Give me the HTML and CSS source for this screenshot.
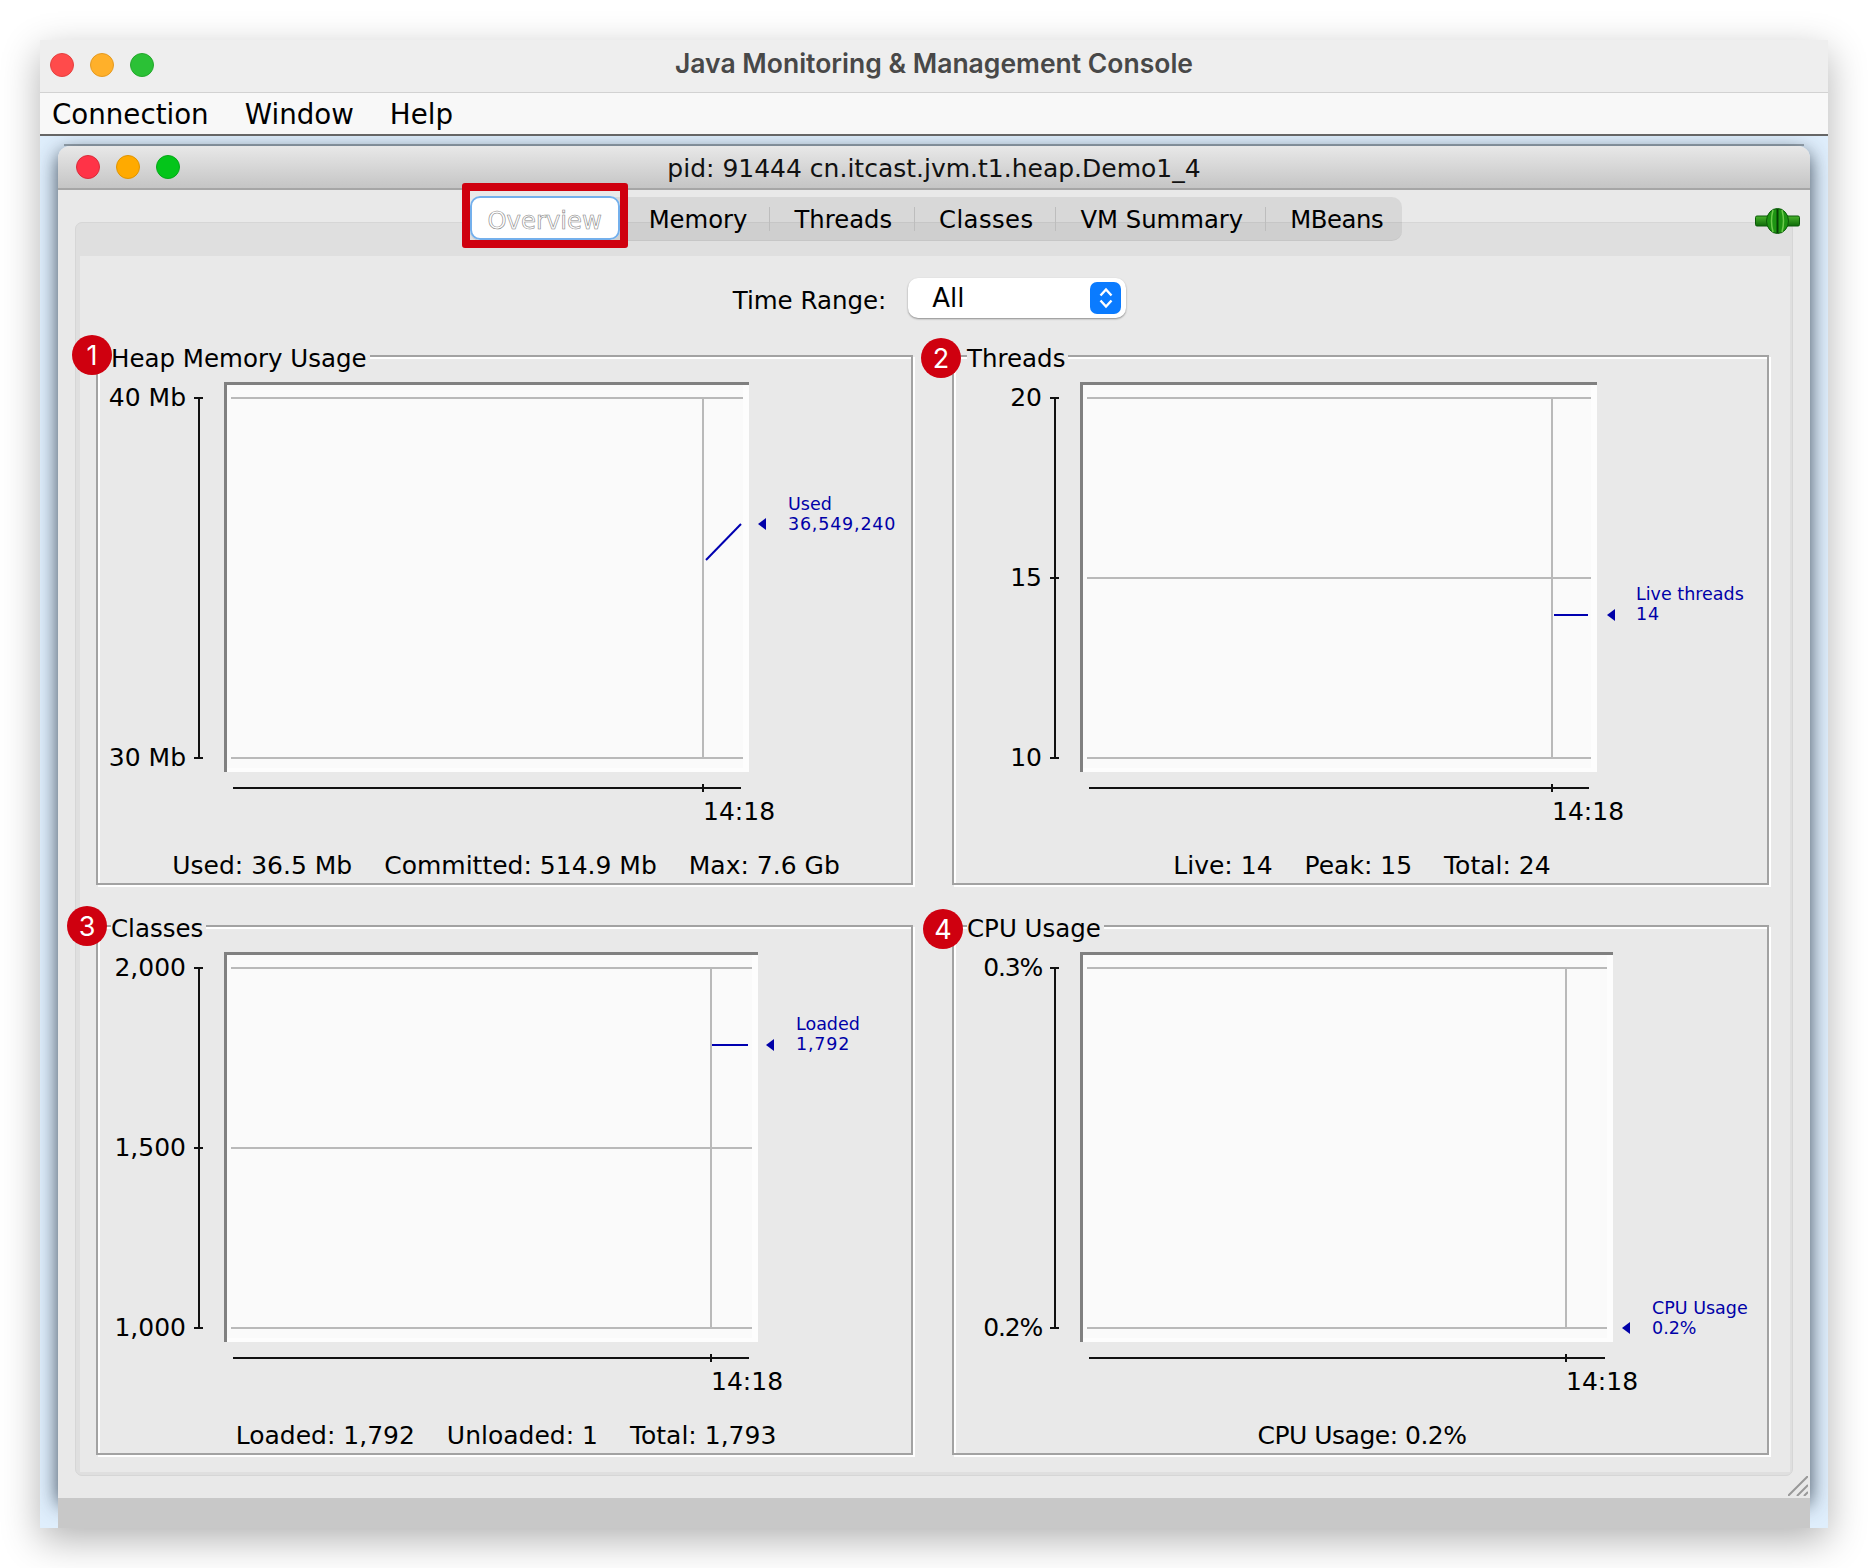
FILE: index.html
```html
<!DOCTYPE html>
<html lang="en">
<head>
    <meta charset="UTF-8">
    <title>Java Monitoring &amp; Management Console</title>
    <link rel="stylesheet" href="styles.css">
</head>
<body>
<div class="app">
    <div class="titlebar">
        <div class="lights">
            <span class="light red"></span><span class="light amber"></span><span class="light green"></span>
        </div>
        <div class="app-title">Java Monitoring &amp; Management Console</div>
    </div>
    <div class="menubar">
        <span>Connection</span>
        <span>Window</span>
        <span>Help</span>
    </div>
    <div class="desktop">
        <div class="frame-edge"></div>
        <div class="frame">
            <div class="frame-title">
                <div class="lights inner">
                    <span class="light red2"></span><span class="light amber2"></span><span class="light green2"></span>
                </div>
                <div class="frame-name">pid: 91444 cn.itcast.jvm.t1.heap.Demo1_4</div>
            </div>
            <div class="frame-body">
                <div class="tabbar">
                    <div class="tab selected">Overview<span class="callout"></span></div>
                    <div class="tab">Memory</div>
                    <div class="tab">Threads</div>
                    <div class="tab">Classes</div>
                    <div class="tab">VM Summary</div>
                    <div class="tab">MBeans</div>
                </div>
                <svg class="plug" width="45" height="26" viewBox="0 0 45 26">
                    <defs>
                        <linearGradient id="plugBar" x1="0" y1="0" x2="0" y2="1">
                            <stop offset="0" stop-color="#49b32c"/>
                            <stop offset="1" stop-color="#0d6a08"/>
                        </linearGradient>
                    </defs>
                    <rect x="0.5" y="8" width="44" height="10" rx="1.5" fill="url(#plugBar)" stroke="#0b5a08"/>
                    <ellipse cx="22.5" cy="13" rx="11" ry="12.5" fill="#1d9412" stroke="#0b5a08"/>
                    <path d="M18 2 Q15 13 18 24 M27 2 Q30 13 27 24" fill="none" stroke="#6cc94c" stroke-width="1.5"/>
                    <path d="M22.5 1 V25" stroke="#063f04" stroke-width="2"/>
                </svg>
                <div class="tabpane">
                    <div class="tabcontent">
                        <div class="range-row">
                            <span class="range-label">Time Range:</span>
                            <div class="select">
                                <span>All</span>
                                <span class="select-btn">
                                    <svg width="18" height="26" viewBox="0 0 18 26">
                                        <path d="M3.5 10.5 L9 4.5 L14.5 10.5 M3.5 15.5 L9 21.5 L14.5 15.5" fill="none" stroke="#fff" stroke-width="2.4"/>
                                    </svg>
                                </span>
                            </div>
                        </div>
                        <div class="charts">

                            <!-- Heap -->
                            <div class="panel">
                                <span class="badge badge-1">1</span>
                                <span class="panel-title">Heap Memory Usage</span>
                                <svg class="chart" width="813" height="476">
                                    <rect class="plot-edge" x="126" y="24" width="525" height="390"/>
                                    <rect class="plot-bg" x="129" y="27" width="516" height="383"/>
                                    <path class="plot-border" d="M127.5 414 V25.5 H651"/>
                                    <path class="grid" d="M133 40 H645 M133 400 H645 M605 40 V400"/>
                                    <path class="axis" d="M101 40 V400 M96 40 H105 M96 400 H105 M135 430 H643 M605 426 V434"/>
                                    <text class="tick" x="88" y="48" text-anchor="end">40 Mb</text>
                                    <text class="tick" x="88" y="408" text-anchor="end">30 Mb</text>
                                    <text class="tick" x="605" y="462">14:18</text>
                                    <path class="series" d="M608 202 L643 166"/>
                                    <path class="marker" d="M660 166 L668 160 V172 Z"/>
                                    <text class="legend" x="690" y="152">Used</text>
                                    <text class="legend num" x="690" y="172">36,549,240</text>
                                </svg>
                                <div class="stats"><span>Used: 36.5 Mb</span><span>Committed: 514.9 Mb</span><span>Max: 7.6 Gb</span></div>
                            </div>

                            <!-- Threads -->
                            <div class="panel">
                                <span class="badge badge-2">2</span>
                                <span class="panel-title">Threads</span>
                                <svg class="chart" width="813" height="476">
                                    <rect class="plot-edge" x="126" y="24" width="517" height="390"/>
                                    <rect class="plot-bg" x="129" y="27" width="508" height="383"/>
                                    <path class="plot-border" d="M127.5 414 V25.5 H643"/>
                                    <path class="grid" d="M133 40 H637 M133 220 H637 M133 400 H637 M598 40 V400"/>
                                    <path class="axis" d="M101 40 V400 M96 40 H105 M96 220 H105 M96 400 H105 M135 430 H635 M598 426 V434"/>
                                    <text class="tick" x="88" y="48" text-anchor="end">20</text>
                                    <text class="tick" x="88" y="228" text-anchor="end">15</text>
                                    <text class="tick" x="88" y="408" text-anchor="end">10</text>
                                    <text class="tick" x="598" y="462">14:18</text>
                                    <path class="series" d="M600 257 H634"/>
                                    <path class="marker" d="M653 257 L661 251 V263 Z"/>
                                    <text class="legend" x="682" y="242">Live threads</text>
                                    <text class="legend num" x="682" y="262">14</text>
                                </svg>
                                <div class="stats"><span>Live: 14</span><span>Peak: 15</span><span>Total: 24</span></div>
                            </div>

                            <!-- Classes -->
                            <div class="panel">
                                <span class="badge badge-3">3</span>
                                <span class="panel-title">Classes</span>
                                <svg class="chart" width="813" height="476">
                                    <rect class="plot-edge" x="126" y="24" width="534" height="390"/>
                                    <rect class="plot-bg" x="129" y="27" width="525" height="383"/>
                                    <path class="plot-border" d="M127.5 414 V25.5 H660"/>
                                    <path class="grid" d="M133 40 H654 M133 220 H654 M133 400 H654 M613 40 V400"/>
                                    <path class="axis" d="M101 40 V400 M96 40 H105 M96 220 H105 M96 400 H105 M135 430 H651 M613 426 V434"/>
                                    <text class="tick" x="88" y="48" text-anchor="end">2,000</text>
                                    <text class="tick" x="88" y="228" text-anchor="end">1,500</text>
                                    <text class="tick" x="88" y="408" text-anchor="end">1,000</text>
                                    <text class="tick" x="613" y="462">14:18</text>
                                    <path class="series" d="M614 117 H650"/>
                                    <path class="marker" d="M668 117 L676 111 V123 Z"/>
                                    <text class="legend" x="698" y="102">Loaded</text>
                                    <text class="legend num" x="698" y="122">1,792</text>
                                </svg>
                                <div class="stats"><span>Loaded: 1,792</span><span>Unloaded: 1</span><span>Total: 1,793</span></div>
                            </div>

                            <!-- CPU -->
                            <div class="panel">
                                <span class="badge badge-4">4</span>
                                <span class="panel-title">CPU Usage</span>
                                <svg class="chart" width="813" height="476">
                                    <rect class="plot-edge" x="126" y="24" width="533" height="390"/>
                                    <rect class="plot-bg" x="129" y="27" width="524" height="383"/>
                                    <path class="plot-border" d="M127.5 414 V25.5 H659"/>
                                    <path class="grid" d="M133 40 H653 M133 400 H653 M612 40 V400"/>
                                    <path class="axis" d="M101 40 V400 M96 40 H105 M96 400 H105 M135 430 H651 M612 426 V434"/>
                                    <text class="tick pct" x="88" y="48" text-anchor="end">0.3%</text>
                                    <text class="tick pct" x="88" y="408" text-anchor="end">0.2%</text>
                                    <text class="tick" x="612" y="462">14:18</text>
                                    <path class="marker" d="M668 400 L676 394 V406 Z"/>
                                    <text class="legend" x="698" y="386">CPU Usage</text>
                                    <text class="legend" x="698" y="406">0.2%</text>
                                </svg>
                                <div class="stats cpu-stats"><span>CPU Usage: 0.2%</span></div>
                            </div>

                        </div>
                    </div>
                </div>
                <svg class="grip" width="20" height="20" viewBox="0 0 20 20">
                    <path d="M0 20 L20 0 M9 20 L20 9 M16 20 L20 16" stroke="#999" stroke-width="2"/>
                </svg>
            </div>
        </div>
        <div class="frame-foot"></div>
    </div>
</div>
</body>
</html>
```

FILE: styles.css
```css
* {
    box-sizing: border-box;
}
html, body {
    margin: 0;
    height: 1568px;
    background-color: #fff;
    overflow: hidden;
}
body {
    font-family: "DejaVu Sans", sans-serif;
    color: #000;
}
.app {
    width: 1788px;
    height: 1488px;
    margin: 40px 0 0 40px;
    display: flex;
    flex-direction: column;
    box-shadow: 0 12px 36px rgba(0, 0, 0, 0.3);
}

/* top bars */
.titlebar {
    height: 53px;
    flex: none;
    display: grid;
    grid-template-columns: 1fr auto 1fr;
    align-items: center;
    background-color: #eeeeee;
    border-bottom: 1px solid #d2d2d2;
}
.lights {
    display: flex;
    gap: 16px;
    padding-left: 10px;
    margin-bottom: 3px;
}
.lights.inner {
    padding-left: 18px;
    margin-bottom: 0;
}
.light {
    width: 24px;
    height: 24px;
    border-radius: 50%;
}
.red { background-color: #ff4b4b; border: 1px solid #e5403f; }
.amber { background-color: #ffb02a; border: 1px solid #e59a20; }
.green { background-color: #2bc136; border: 1px solid #24a82c; }
.red2 { background-color: #ff3347; border: 1px solid #d92c3a; }
.amber2 { background-color: #ffaa00; border: 1px solid #e09400; }
.green2 { background-color: #04c51a; border: 1px solid #05a818; }
.app-title {
    font-family: Inter, sans-serif;
    font-weight: 600;
    font-size: 26.5px;
    color: #484848;
    padding-bottom: 7px;
}
.menubar {
    height: 43px;
    flex: none;
    display: flex;
    align-items: center;
    gap: 36px;
    padding: 2px 0 0 12px;
    font-size: 27.7px;
    background-color: #f8f8f8;
    border-bottom: 2px solid #666;
}

/* internal frame */
.desktop {
    flex: 1;
    display: flex;
    flex-direction: column;
    padding: 0 18px;
    overflow: hidden;
    background-color: #dfeefc;
}
.frame-edge {
    flex: none;
    height: 2px;
    margin: 8px 6px 0;
    background-color: #9aa6b0;
}
.frame {
    flex: 1;
    display: flex;
    flex-direction: column;
    border-radius: 12px 12px 0 0;
    box-shadow: 0 6px 20px rgba(30, 45, 60, 0.85);
}
.frame-foot {
    flex: none;
    height: 30px;
    position: relative;
    background-color: #c8c8c8;
}
.frame-title {
    height: 44px;
    flex: none;
    display: grid;
    grid-template-columns: 1fr auto 1fr;
    align-items: center;
    border-radius: 12px 12px 0 0;
    background: linear-gradient(#e8e8e8, #c5c5c5);
    border-bottom: 2px solid #a6a6a6;
}
.frame-name {
    font-size: 25px;
    color: #111;
    padding-top: 2px;
}
.frame-body {
    flex: 1;
    display: flex;
    flex-direction: column;
    position: relative;
    background-color: #e9e9e9;
}

/* tabs */
.tabbar {
    align-self: center;
    flex: none;
    height: 44px;
    margin: 7px 0 0 4px;
    display: flex;
    align-items: center;
    position: relative;
    z-index: 1;
    font-size: 24.3px;
    border-radius: 10px;
    background-color: rgba(0, 0, 0, 0.07);
    box-shadow: inset 0 -1px 0 rgba(0, 0, 0, 0.04);
}
.tab {
    height: 24px;
    padding: 0 22px 0 24px;
    display: flex;
    align-items: center;
    border-left: 1.5px solid #bdbdbd;
}
.tab:nth-child(2) {
    border-left: none;
    padding-left: 29px;
}
.tab:nth-child(4) {
    letter-spacing: 0.4px;
}
.tab:nth-child(6) {
    letter-spacing: -0.4px;
    padding-right: 19px;
}
.tab.selected {
    width: 150px;
    height: 44px;
    margin-bottom: 3px;
    padding: 5px 0 0;
    justify-content: center;
    position: relative;
    border: none;
    border-radius: 10px;
    color: #fff;
    -webkit-text-stroke: 0.6px #858585;
    background-color: #fff;
    box-shadow: inset 0 0 0 2px #74b0ec;
}
.callout {
    position: absolute;
    top: -13px;
    left: -8px;
    right: -8px;
    bottom: -8px;
    border: 8px solid #cf000f;
    border-radius: 3px;
}
.plug {
    position: absolute;
    top: 18px;
    right: 10px;
    z-index: 1;
}
.grip {
    position: absolute;
    right: 2px;
    bottom: 2px;
}
.tabpane {
    flex: 1;
    display: flex;
    margin: -19px 17px 22px;
    padding: 33px 2px 3px 4px;
    border: 1px solid #d6d6d6;
    border-radius: 7px;
    background-color: #dfdfdf;
}
.tabcontent {
    flex: 1;
    padding: 22px 19px 0 16px;
    background-color: #e9e9e9;
}

/* time range */
.range-row {
    height: 40px;
    display: flex;
    align-items: center;
    justify-content: center;
    gap: 22px;
    padding-right: 8px;
    font-size: 26px;
}
.range-label {
    font-size: 24.5px;
    padding-top: 5px;
}
.select {
    width: 218px;
    height: 40px;
    display: flex;
    align-items: center;
    justify-content: space-between;
    padding: 0 5px 0 24px;
    border-radius: 10px;
    background-color: #fff;
    box-shadow: 0 1px 2px rgba(0, 0, 0, 0.4);
}
.select-btn {
    width: 31px;
    height: 32px;
    display: flex;
    align-items: center;
    justify-content: center;
    border-radius: 7px;
    background-color: #0a7bff;
}

/* panels */
.charts {
    display: grid;
    grid-template-columns: 817px 817px;
    grid-template-rows: 530px 530px;
    column-gap: 39px;
    row-gap: 40px;
    margin-top: 37px;
}
.panel {
    position: relative;
    border: 2px solid #a2a2a2;
    box-shadow: 2px 2px 0 #fff, inset 2px 2px 0 #fff;
}
.panel-title {
    position: absolute;
    top: -13px;
    left: 13px;
    padding-right: 3px;
    height: 30px;
    line-height: 30px;
    font-size: 24.5px;
    background-color: #e9e9e9;
}
.badge {
    position: absolute;
    z-index: 2;
    width: 40px;
    height: 40px;
    display: flex;
    align-items: center;
    justify-content: center;
    border-radius: 50%;
    font-family: Inter, sans-serif;
    font-size: 27px;
    color: #fff;
    background-color: #cf000f;
}
.badge-1 { left: -26px; top: -22px; }
.badge-2 { left: -33px; top: -19px; }
.badge-3 { left: -31px; top: -21px; }
.badge-4 { left: -31px; top: -18px; }
.chart {
    display: block;
    margin-top: 1px;
}
.plot-edge { fill: #fdfdfd; }
.plot-bg { fill: #fafafa; }
.plot-border {
    fill: none;
    stroke: #808080;
    stroke-width: 3;
}
.grid {
    fill: none;
    stroke: #b9b9b9;
    stroke-width: 2;
}
.axis {
    fill: none;
    stroke: #111;
    stroke-width: 2;
}
.tick {
    font-size: 25px;
    fill: #000;
}
.pct {
    letter-spacing: -1.2px;
}
.series {
    fill: none;
    stroke: #0000b0;
    stroke-width: 2;
}
.marker { fill: #0000a8; }
.legend {
    font-size: 17.5px;
    fill: #0000a8;
}
.num {
    letter-spacing: 0.8px;
}
.stats {
    display: flex;
    justify-content: center;
    gap: 32px;
    padding: 17px 0 0 3px;
    font-size: 25px;
    line-height: 30px;
}
.cpu-stats {
    letter-spacing: -0.5px;
}
```
